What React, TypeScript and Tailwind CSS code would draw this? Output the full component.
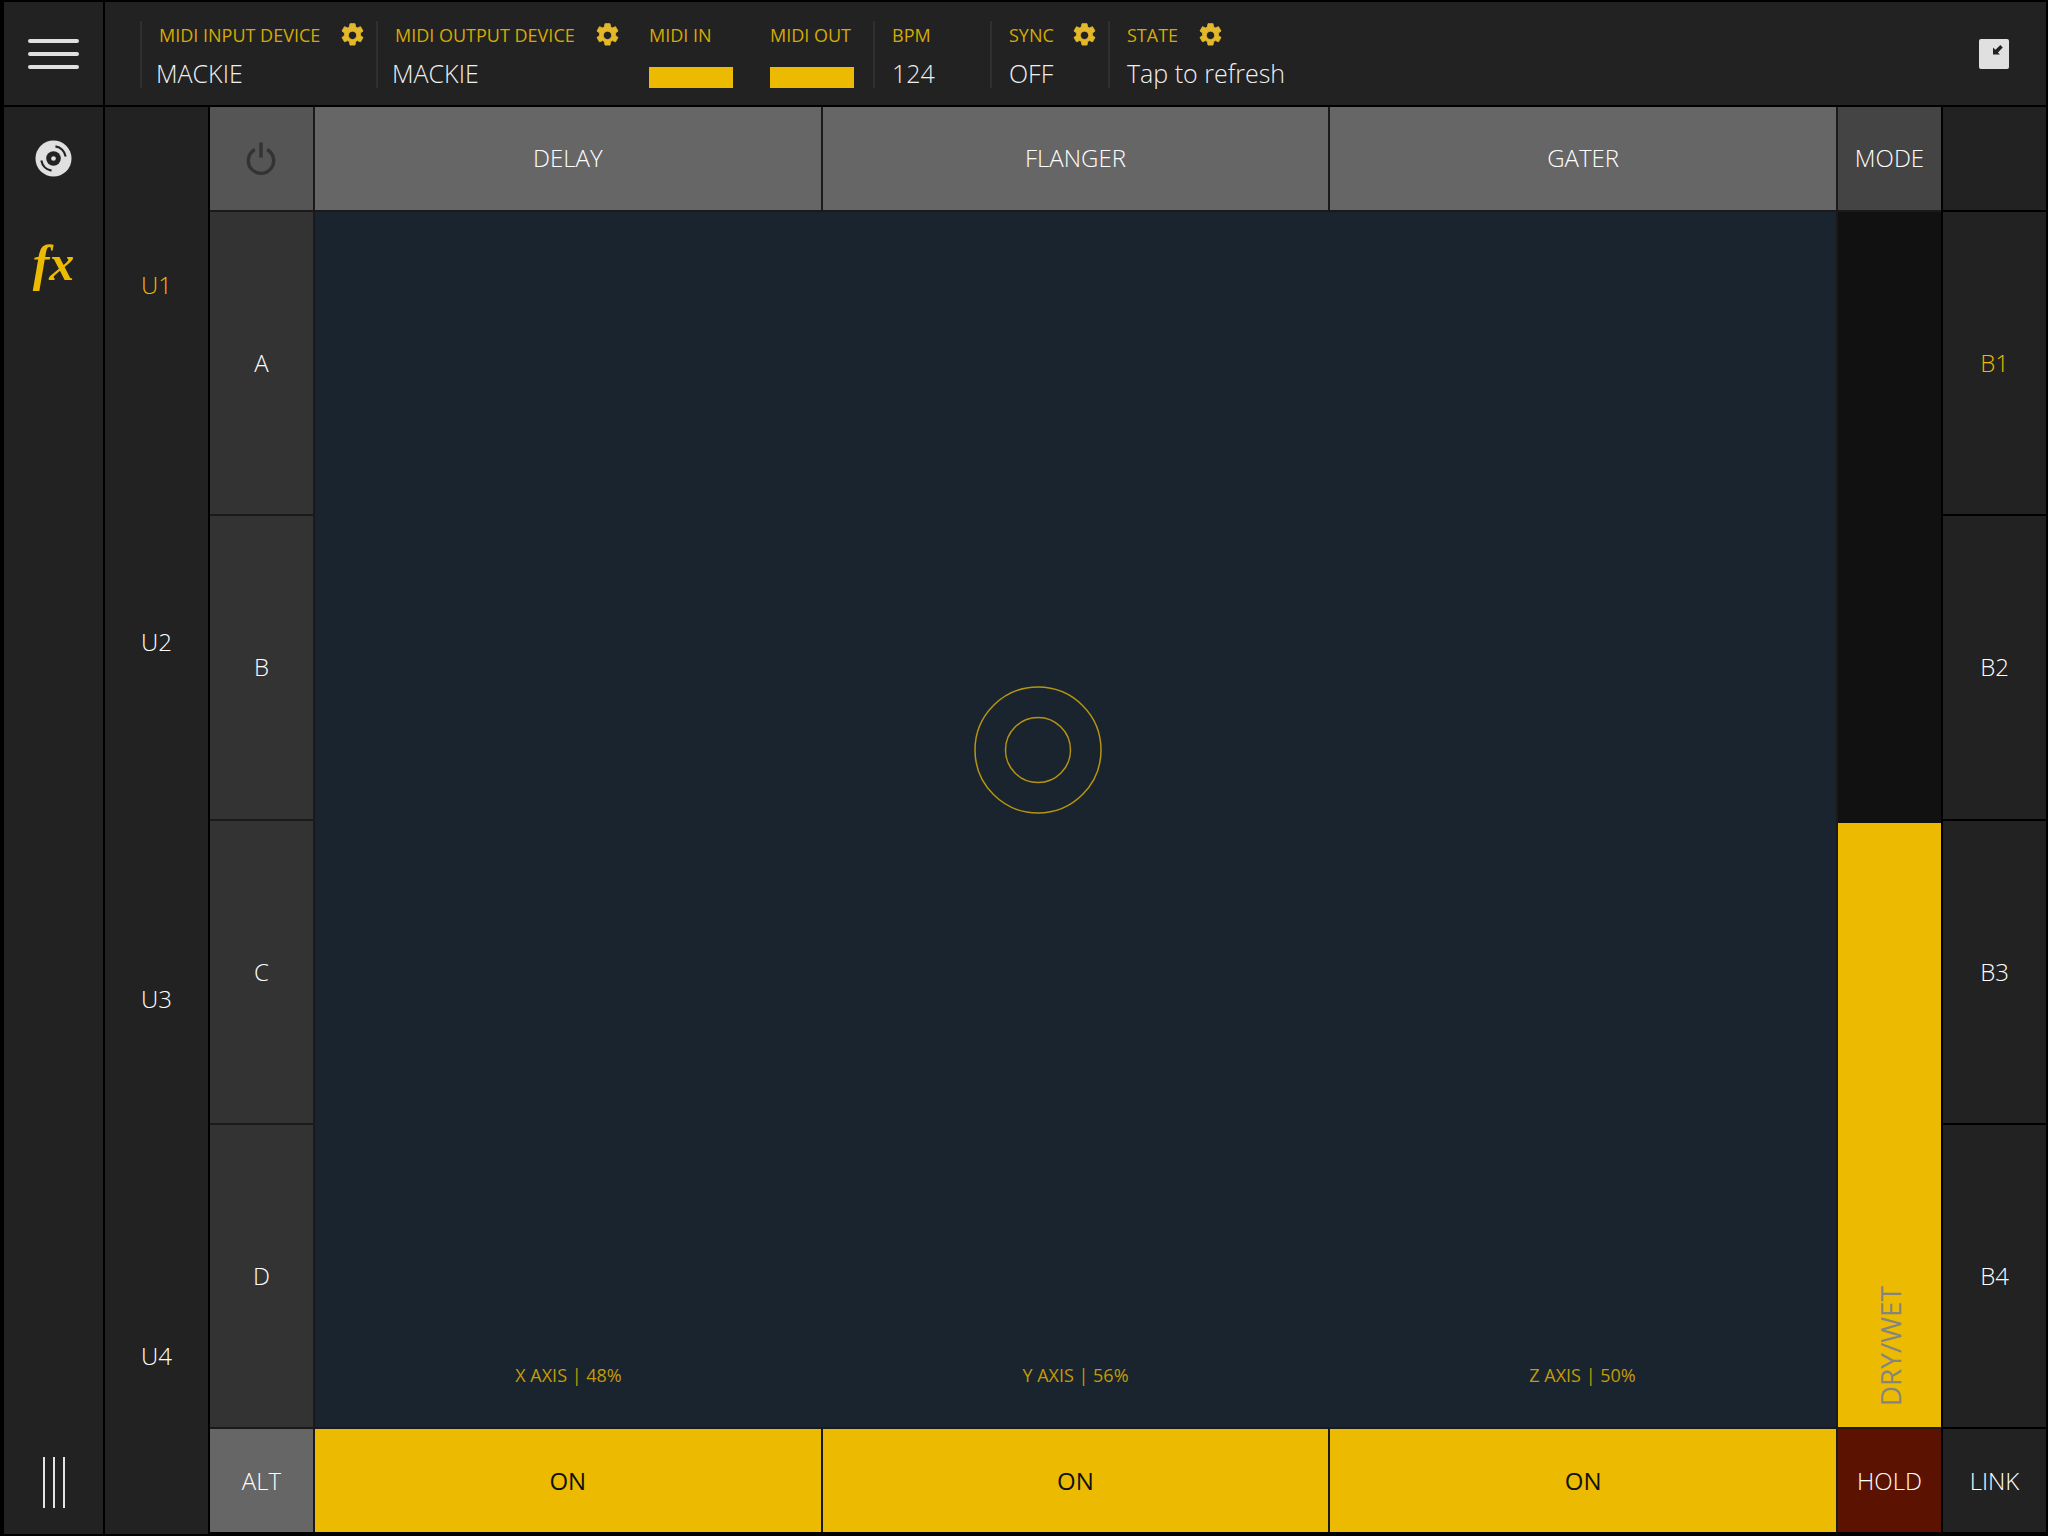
import React from 'react';

const FONT = { fontFamily: '"Open Sans", "Noto Sans", sans-serif' };

const Gear = () => (
  <svg viewBox="0 0 24 24" className="w-[25px] h-[25px] shrink-0 -my-[2px]" fill="#e3b92b" stroke="#e3b92b" strokeWidth="0.8" strokeLinejoin="round">
    <path
      fillRule="evenodd"
      d="M9.6 0.6h4.8l0.6 3.2 1.7 0.9 3-1.2 2.400 4.200-2.500 2 0 2.200 2.500 2-2.400 4.200-3-1.200-1.700 0.900-0.600 3.400H9.600L9 17.800l-1.700-0.900-3 1.200-2.400-4.200 2.500-2 0-2.200-2.500-2 2.400-4.200 3 1.200L9 3.800zM12 7.900a4 4 0 1 0 0 8a4 4 0 0 0 0-8z"
    />
  </svg>
);

const Disc = () => (
  <svg viewBox="0 0 38 38" className="w-[37px] h-[37px]">
    <circle cx="19" cy="19" r="18.500" fill="#e0e0e0" />
    <circle cx="19" cy="19" r="7.500" fill="#222" />
    <circle cx="19" cy="19" r="2.400" fill="#e0e0e0" />
    <path d="M21 6.500a13 13 0 0 1 10.500 10.500" fill="none" stroke="#222" strokeWidth="2.200" />
    <path d="M17 31.500A13 13 0 0 1 6.500 21" fill="none" stroke="#222" strokeWidth="2.200" />
  </svg>
);

const Field = ({ label, gear, value, width, flush, gap }: { label: string; gear?: boolean; value: string; width: string; flush?: boolean; gap?: string }) => (
  <div className={`${width} h-[67px] border-l-2 border-[#303030] pl-[17px] flex flex-col justify-between shrink-0`}>
    <div className={`flex items-center ${gap ?? 'gap-[20px]'} h-[28px] text-[18px] text-[#d4aa06] whitespace-nowrap`}>
      <span>{label}</span>
      {gear && <Gear />}
    </div>
    <div className={`text-[25px] leading-[30px] font-light text-[#f0f0f0] ${flush ? '' : '-ml-[3px]'}`}>{value}</div>
  </div>
);

const Meter = ({ label, width }: { label: string; width: string }) => (
  <div className={`${width} h-[67px] flex flex-col justify-between shrink-0`}>
    <div className="h-[28px] flex items-center text-[18px] text-[#d4aa06]">{label}</div>
    <div className="w-[84px] h-[21px] bg-[#ecba00]" />
  </div>
);

const Cell = ({ className, children }: { className: string; children?: React.ReactNode }) => (
  <div className={`flex items-center justify-center text-[24px] font-light ${className}`}>{children}</div>
);

export default function App() {
  return (
    <div style={FONT} className="w-[2048px] h-[1536px] bg-black pt-[2px] overflow-hidden flex flex-col gap-[2px]">
      {/* Top bar */}
      <div className="h-[103px] flex gap-[2px] pl-[4px] pr-[2px]">
        <div className="w-[99px] bg-[#222] flex flex-col items-center justify-center gap-[9px]">
          <div className="w-[51px] h-[4px] rounded-full bg-[#e0e0e0]" />
          <div className="w-[51px] h-[4px] rounded-full bg-[#e0e0e0]" />
          <div className="w-[51px] h-[4px] rounded-full bg-[#e0e0e0]" />
        </div>
        <div className="flex-1 bg-[#222] flex items-center pl-[35px] pr-[37px] pt-[2px]">
          <Field label="MIDI INPUT DEVICE" gear value="MACKIE" width="w-[236px]" />
          <Field label="MIDI OUTPUT DEVICE" gear value="MACKIE" width="w-[273px]" />
          <Meter label="MIDI IN" width="w-[121px]" />
          <Meter label="MIDI OUT" width="w-[103px]" />
          <Field label="BPM" value="124" width="w-[117px]" flush />
          <Field label="SYNC" gear value="OFF" width="w-[118px]" flush gap="gap-[18px]" />
          <Field label="STATE" gear value="Tap to refresh" width="w-[240px]" flush />
          <div className="ml-auto -mt-[2px] w-[30px] h-[30px] rounded-[2px] bg-[#e0e0e0] flex pt-[6px] pl-[14px]">
            <svg viewBox="0 0 9.500 9.500" className="w-[10px] h-[10px]" fill="#222">
              <path d="M0 2.300 0 9 6.500 9 4.700 7.200 9.300 2.400 7 0 2.300 4.600z" />
            </svg>
          </div>
        </div>
      </div>

      {/* Main */}
      <div className="h-[1427px] flex gap-[2px] pl-[4px] pr-[2px]">
        <div className="w-[99px] bg-[#222] flex flex-col items-center">
          <div className="h-[103px] pb-[1px] flex items-center justify-center shrink-0">
            <Disc />
          </div>
          <div
            style={{ fontFamily: '"Liberation Serif", serif' }}
            className="mt-[28px] text-[50px] leading-[50px] font-bold italic text-[#ecba00]"
          >
            fx
          </div>
          <div className="mt-auto mb-[26px] flex gap-[8px]">
            <div className="w-[2px] h-[51px] bg-[#e4e4e4]" />
            <div className="w-[2px] h-[51px] bg-[#e4e4e4]" />
            <div className="w-[2px] h-[51px] bg-[#e4e4e4]" />
          </div>
        </div>

        <div className="w-[103px] bg-[#222] flex flex-col text-[24px] font-light text-white">
          <div className="flex-1 flex items-center justify-center text-[#ecba00]">U1</div>
          <div className="flex-1 flex items-center justify-center">U2</div>
          <div className="flex-1 flex items-center justify-center">U3</div>
          <div className="flex-1 flex items-center justify-center">U4</div>
        </div>

        <div className="w-[1731px] h-[1425px] bg-[#1a1a1a] grid grid-cols-[103px_repeat(3,1fr)_103px] grid-rows-[103px_repeat(4,1fr)_103px] gap-[2px] text-white">
          <Cell className="bg-[#555] pr-[2px]">
            <svg viewBox="0 0 32 34" className="w-[30px] h-[33px]" fill="none" stroke="#333" strokeWidth="3.600">
              <path d="M9.500 7.500a13.500 13.500 0 1 0 13 0" />
              <path d="M16 0v16" />
            </svg>
          </Cell>
          <Cell className="bg-[#666] pb-[2px]">DELAY</Cell>
          <Cell className="bg-[#666] pb-[2px]">FLANGER</Cell>
          <Cell className="bg-[#666] pb-[2px]">GATER</Cell>
          <Cell className="bg-[#444] pb-[2px]">MODE</Cell>

          <Cell className="bg-[#333] col-start-1 row-start-2">A</Cell>
          <Cell className="bg-[#333] col-start-1 row-start-3">B</Cell>
          <Cell className="bg-[#333] col-start-1 row-start-4">C</Cell>
          <Cell className="bg-[#333] col-start-1 row-start-5">D</Cell>

          {/* XY pad */}
          <div className="relative col-start-2 col-span-3 row-start-2 row-span-4 bg-[#19242f] grid grid-cols-3 items-end pb-[38px] text-[18px] text-[#c39c06]">
            <div className="text-center">X AXIS | 48%</div>
            <div className="text-center">Y AXIS | 56%</div>
            <div className="text-center">Z AXIS | 50%</div>
            <svg viewBox="0 0 128 128" className="absolute left-[659px] top-[474px] w-[128px] h-[128px]" fill="none" stroke="#b59510" strokeWidth="1.500">
              <circle cx="64" cy="64" r="63" />
              <circle cx="64" cy="64" r="32.500" />
            </svg>
          </div>

          {/* Dry/wet fader */}
          <div className="col-start-5 row-start-2 row-span-4 bg-[#111] flex flex-col justify-end">
            <div className="h-[604px] bg-[#ecba00] flex items-end justify-center pb-[21px]">
              <span className="[writing-mode:vertical-rl] rotate-180 text-[28px] leading-[34px] translate-x-[1px] text-[#858580]">DRY/WET</span>
            </div>
          </div>

          <Cell className="bg-[#666]">ALT</Cell>
          <Cell className="bg-[#ecba00] text-[#111] font-normal">ON</Cell>
          <Cell className="bg-[#ecba00] text-[#111] font-normal">ON</Cell>
          <Cell className="bg-[#ecba00] text-[#111] font-normal">ON</Cell>
          <Cell className="bg-[#5c1200]">HOLD</Cell>
        </div>

        <div className="w-[103px] h-[1425px] flex flex-col gap-[2px] text-white">
          <div className="h-[103px] bg-[#222]" />
          <Cell className="flex-1 bg-[#222] text-[#ecba00]">B1</Cell>
          <Cell className="flex-1 bg-[#222]">B2</Cell>
          <Cell className="flex-1 bg-[#222]">B3</Cell>
          <Cell className="flex-1 bg-[#222]">B4</Cell>
          <Cell className="h-[103px] flex-none bg-[#222]">LINK</Cell>
        </div>
      </div>
    </div>
  );
}
